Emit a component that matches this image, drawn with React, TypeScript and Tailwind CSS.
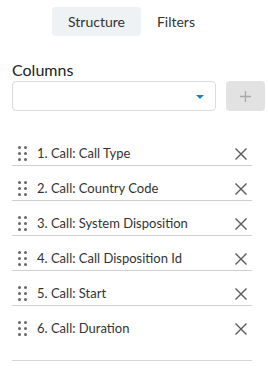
import React from "react";

const items = [
  "1. Call: Call Type",
  "2. Call: Country Code",
  "3. Call: System Disposition",
  "4. Call: Call Disposition Id",
  "5. Call: Start",
  "6. Call: Duration",
];

function Handle() {
  return (
    <div className="grid grid-cols-2 gap-x-[3px] gap-y-[3px] w-[9px]">
      {Array.from({ length: 6 }).map((_, i) => (
        <span key={i} className="block w-[3px] h-[3px] rounded-full bg-[#666]" />
      ))}
    </div>
  );
}

function XIcon() {
  return (
    <svg width="12" height="12" viewBox="0 0 12 12" className="block">
      <path d="M1 1L11 11M11 1L1 11" stroke="#5a5a5a" strokeWidth="1.4" strokeLinecap="square" fill="none" />
    </svg>
  );
}

export default function App() {
  return (
    <div
      className="w-[269px] h-[371px] bg-white text-[#333] overflow-hidden"
      style={{ fontFamily: "Lato, 'Noto Sans', sans-serif" }}
    >
      <div className="flex justify-center pt-[7px] pr-[6px]">
        <div className="h-[29px] px-[16px] flex items-center rounded-[4px] bg-[#eef2f5] text-[14px] text-[#333]">
          Structure
        </div>
        <div className="h-[29px] px-[16px] flex items-center text-[14px] text-[#333]">Filters</div>
      </div>

      <div className="pl-[12px] mt-[24px]">
        <div className="text-[16px] leading-[20px] text-[#222] mb-[1px]">Columns</div>
        <div className="flex items-center">
          <div className="w-[204px] h-[30px] border border-[#dcdcdc] rounded-[4px] flex items-center justify-end pr-[11px]">
            <svg width="8" height="4" viewBox="0 0 8 4" className="block mt-[2px]">
              <path d="M0 0H8L4 4Z" fill="#1a80c4" />
            </svg>
          </div>
          <div className="ml-[10px] w-[39px] h-[30px] rounded-[4px] bg-[#e2e2e2] flex items-center justify-center">
            <svg width="11" height="11" viewBox="0 0 11 11" className="block">
              <path d="M5.5 0V11M0 5.5H11" stroke="#a9a9a9" strokeWidth="1.3" fill="none" />
            </svg>
          </div>
        </div>

        <div className="w-[240px] mt-[20px] pb-[20px] border-b border-[#d6d6d6]">
          {items.map((t, i) => (
            <div
              key={t}
              className={
                "pt-[13px] pb-[2px] " + (i < items.length - 1 ? "border-b border-[#cfcfcf]" : "")
              }
            >
              <div className="h-[19px] flex items-center pl-[6px] pr-[5px]">
                <Handle />
                <span className="ml-[10px] text-[13px] leading-[19px] text-[#333] flex-1">{t}</span>
                <XIcon />
              </div>
            </div>
          ))}
        </div>
      </div>
    </div>
  );
}
